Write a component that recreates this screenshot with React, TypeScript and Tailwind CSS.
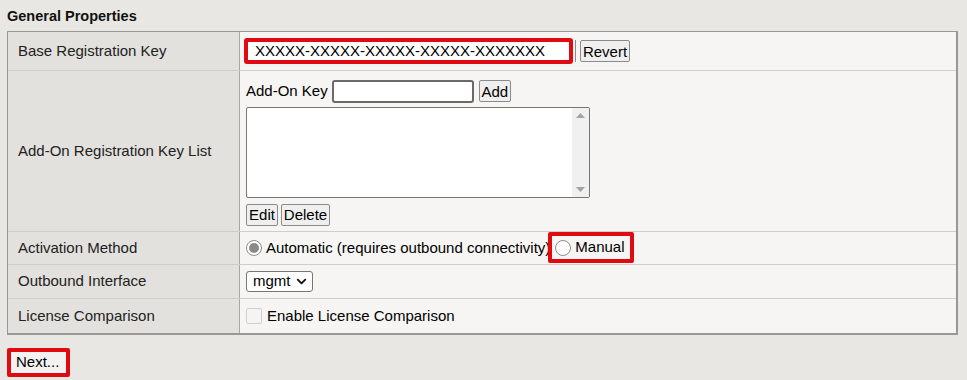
import { ChevronDown } from "lucide-react";

const font = { fontFamily: '"Liberation Sans", Arial, sans-serif' };

function Btn({ children, className = "" }: { children: React.ReactNode; className?: string }) {
  return (
    <span
      className={`inline-flex items-center justify-center h-[22px] px-[2px] bg-[#efefef] border border-[#8a8a8a] rounded-[2px] text-[15px] text-black leading-none ${className}`}
    >
      {children}
    </span>
  );
}

function Row({ label, h, children, last = false }: { label: string; h: string; children: React.ReactNode; last?: boolean }) {
  return (
    <div className={`grid grid-cols-[232px_1fr] ${h} ${last ? "" : "border-b border-[#cfcdc9]"}`}>
      <div className="bg-[#e3e1dd] border-r border-[#a9a7a3] flex items-center pl-[10px] text-[15px] text-[#222]">
        {label}
      </div>
      <div className="bg-[#f6f5f3] pl-[6px] flex items-center">{children}</div>
    </div>
  );
}

export default function App() {
  return (
    <div style={font} className="w-[967px] h-[380px] bg-[#e9e7e3] px-[7px] pt-[8px] text-black overflow-hidden">
      <h2 className="text-[14.5px] font-bold text-[#111] h-[23px] leading-[17px]">General Properties</h2>

      <div className="w-[951px] border border-[#9a9896] border-b-2 border-r-2">
        {/* Base key */}
        <Row label="Base Registration Key" h="h-[39px]">
          <div className="flex items-center -ml-[2px] gap-[2px]">
            <div className="w-[329px] h-[26px] border-[4px] border-[#e00a12] rounded-[3px] bg-white flex items-center pl-[7px] text-[15px]">
              XXXXX-XXXXX-XXXXX-XXXXX-XXXXXXX
            </div>
            <div className="w-[1px] h-[22px] bg-[#8a8a8a]" />
            <Btn className="ml-[2px] w-[50px]">Revert</Btn>
          </div>
        </Row>

        {/* Add-on keys */}
        <Row label="Add-On Registration Key List" h="h-[161px]">
          <div className="flex flex-col gap-[4px] pt-[3px]">
            <div className="flex items-center gap-[4px]">
              <span className="text-[15px]">Add-On Key</span>
              <div className="w-[142px] h-[23px] border-2 border-[#6a6a6a] rounded-[3px] bg-white" />
              <Btn className="w-[32px] ml-[1px]">Add</Btn>
            </div>
            <div className="w-[344px] h-[91px] border border-[#767676] rounded-[2px] bg-white flex justify-end overflow-hidden">
              <div className="w-[17px] h-full bg-[#f0f0f0] flex flex-col items-center justify-between py-[5px]">
                <svg width="9" height="5" viewBox="0 0 9 5"><polygon points="4.5,0 9,5 0,5" fill="#a3a3a3" /></svg>
                <svg width="9" height="5" viewBox="0 0 9 5"><polygon points="0,0 9,0 4.5,5" fill="#a3a3a3" /></svg>
              </div>
            </div>
            <div className="flex gap-[3px] mt-[2px]">
              <Btn className="w-[32px]">Edit</Btn>
              <Btn className="w-[49px]">Delete</Btn>
            </div>
          </div>
        </Row>

        {/* Activation */}
        <Row label="Activation Method" h="h-[33px]">
          <div className="flex items-center text-[15px] h-full">
            <span className="w-[16px] h-[16px] rounded-full border border-[#8d8d8d] bg-white flex items-center justify-center">
              <span className="w-[10px] h-[10px] rounded-full bg-[#8a8a8a]" />
            </span>
            <span className="ml-[4px]">Automatic (requires outbound connectivity)</span>
            <div className="h-[31px] -mt-[1px] border-[4px] border-[#e00a12] rounded-[2px] flex items-center pl-[3px] pr-[5px] ml-[-2px]">
              <span className="w-[16px] h-[16px] rounded-full border border-[#8d8d8d] bg-white" />
              <span className="ml-[4px]">Manual</span>
            </div>
          </div>
        </Row>

        {/* Outbound */}
        <Row label="Outbound Interface" h="h-[34px]">
          <div className="w-[67px] h-[21px] border border-[#767676] rounded-[3px] bg-white flex items-center pl-[6px] gap-[3px] text-[15px]">
            mgmt
            <ChevronDown size={15} strokeWidth={3} className="text-[#111]" />
          </div>
        </Row>

        {/* License comparison */}
        <Row label="License Comparison" h="h-[34px]" last>
          <div className="flex items-center text-[15px]">
            <span className="w-[16px] h-[16px] rounded-[2px] border border-[#cfcfcf] bg-[#f4f4f4]" />
            <span className="ml-[5px]">Enable License Comparison</span>
          </div>
        </Row>
      </div>

      <div className="mt-[13px] w-[63px] h-[29px] border-[4px] border-[#e00a12] rounded-[2px] bg-[#f3f2f0] flex items-center pl-[5px] text-[15px]">
        Next...
      </div>
    </div>
  );
}
